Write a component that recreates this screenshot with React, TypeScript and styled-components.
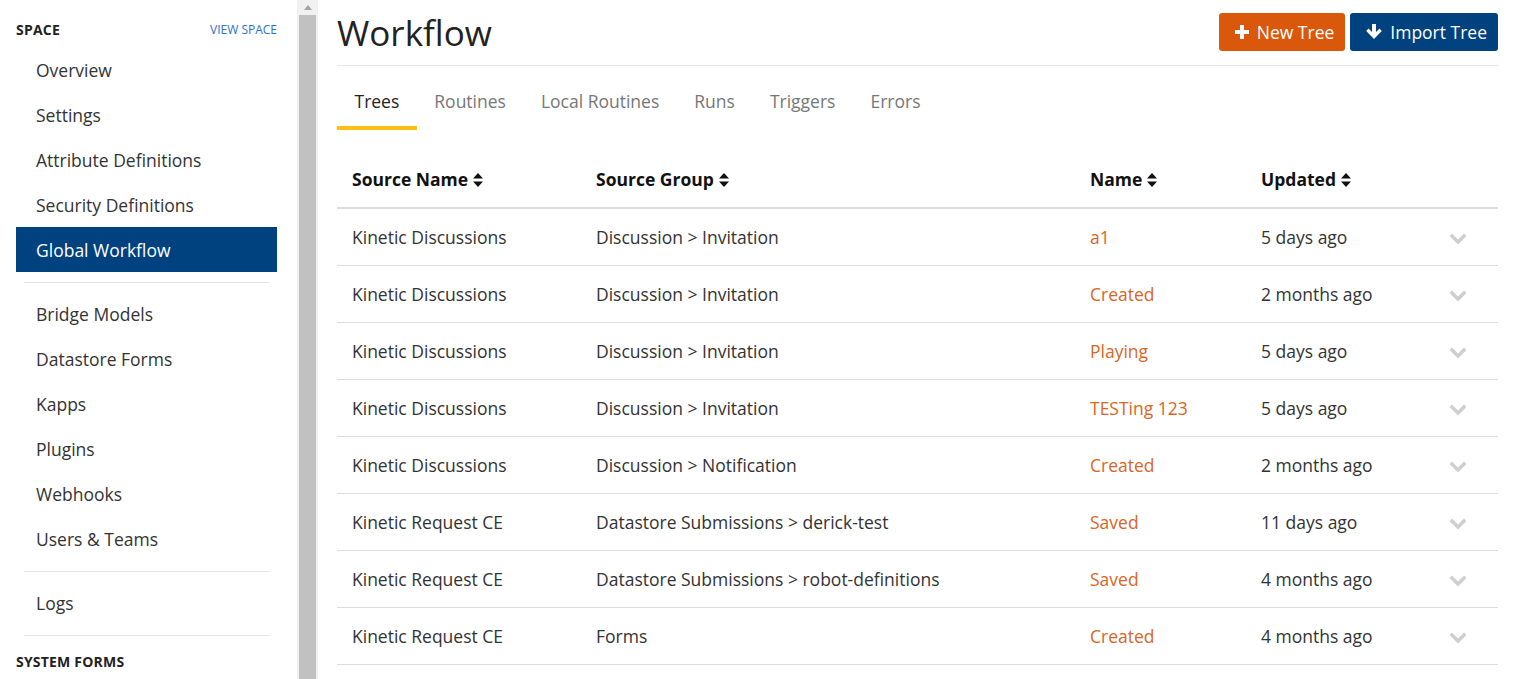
import React from "react";
import styled, { createGlobalStyle } from "styled-components";

const Global = createGlobalStyle`
  html, body { margin: 0; padding: 0; background: #fff; }
  body { font-family: "Open Sans", "Noto Sans", sans-serif; color: #333; overflow: hidden; }
  * { box-sizing: border-box; }
`;

const Page = styled.div`
  display: flex;
  width: 1514px;
  height: 679px;
  overflow: hidden;
`;

const Sidebar = styled.aside`
  width: 297px;
  flex: none;
  padding: 18px 20px 0 16px;
  display: flex;
  flex-direction: column;
`;

const SectionHead = styled.div<{ $spaced?: boolean }>`
  display: flex;
  align-items: center;
  justify-content: space-between;
  height: 22px;
  margin-top: ${(p) => (p.$spaced ? "6px" : "0")};
  margin-bottom: 7px;
`;

const SectionTitle = styled.span`
  font-size: 14px;
  font-weight: 700;
  color: #222;
  letter-spacing: 0.2px;
`;

const SectionLink = styled.span`
  font-size: 12px;
  color: #2d6fcf;
  text-transform: uppercase;
`;

const NavItem = styled.div<{ $active?: boolean }>`
  height: 45px;
  display: flex;
  align-items: center;
  padding-left: 20px;
  font-size: 17.5px;
  color: ${(p) => (p.$active ? "#fff" : "#333")};
  background: ${(p) => (p.$active ? "#00427f" : "transparent")};
`;

const NavDivider = styled.hr`
  border: 0;
  border-top: 1px solid #e3e3e3;
  margin: 10px 8px 8px;
`;

const ScrollTrack = styled.div`
  width: 21px;
  flex: none;
  background: #f1f1f1;
  display: flex;
  flex-direction: column;
  align-items: stretch;
  padding: 0 2px;
`;

const ScrollArrow = styled.div`
  height: 15px;
  display: flex;
  align-items: center;
  justify-content: center;
`;

const ScrollThumb = styled.div`
  flex: 1;
  background: #c1c1c1;
`;

const Main = styled.main`
  flex: 1;
  padding: 0 16px 0 19px;
  display: flex;
  flex-direction: column;
  min-width: 0;
`;

const Header = styled.header`
  height: 66px;
  display: flex;
  align-items: center;
  justify-content: space-between;
  border-bottom: 1px solid #e8e8e8;
`;

const Title = styled.h1`
  margin: 0;
  font-size: 35px;
  font-weight: 400;
  color: #222;
  line-height: 1;
`;

const Actions = styled.div`
  display: flex;
  gap: 5px;
  align-self: flex-start;
  margin-top: 13px;
`;

const Button = styled.button<{ $variant: "orange" | "navy" }>`
  height: 38px;
  border: 0;
  border-radius: 3px;
  padding: 0 11px 0 16px;
  display: flex;
  align-items: center;
  gap: 8px;
  font-family: inherit;
  font-size: 17.5px;
  color: #fff;
  background: ${(p) => (p.$variant === "orange" ? "#d9580b" : "#00427f")};
`;

const Tabs = styled.nav`
  display: flex;
  height: 64px;
`;

const Tab = styled.div<{ $active?: boolean }>`
  padding: 10px 17.5px 0;
  display: flex;
  align-items: center;
  font-size: 17.5px;
  color: ${(p) => (p.$active ? "#222" : "#777")};
  border-bottom: 4px solid ${(p) => (p.$active ? "#fbc117" : "transparent")};
`;

const Table = styled.table`
  margin-top: 21px;
  width: 100%;
  border-collapse: collapse;
  font-size: 17.5px;
`;

const Th = styled.th<{ $w?: number }>`
  text-align: left;
  font-weight: 700;
  font-size: 17.5px;
  color: #111;
  height: 57px;
  padding: 0 15px;
  border-bottom: 2px solid #ddd;
  width: ${(p) => (p.$w ? `${p.$w}px` : "auto")};
  white-space: nowrap;
`;

const Td = styled.td`
  height: 57px;
  padding: 0 15px;
  border-bottom: 1px solid #ddd;
  color: #333;
  white-space: nowrap;
`;

const NameLink = styled.span`
  color: #d9661f;
`;

const ChevronCell = styled(Td)`
  text-align: right;
  padding-right: 32px;
`;

const SortIcon = () => (
  <svg width="10" height="14" viewBox="0 0 10 14" style={{ marginLeft: 5, verticalAlign: "-1px" }}>
    <path d="M5 0 L10 5.5 H0 Z M5 14 L10 8.5 H0 Z" fill="#111" />
  </svg>
);

const Chevron = () => (
  <svg width="16" height="12" viewBox="0 0 16 12" style={{ verticalAlign: "middle" }}>
    <path d="M2 3 L8 9 L14 3" stroke="#cfcfcf" strokeWidth="3.4" fill="none" strokeLinecap="square" />
  </svg>
);

const PlusIcon = () => (
  <svg width="14" height="14" viewBox="0 0 14 14">
    <path d="M5 0 H9 V5 H14 V9 H9 V14 H5 V9 H0 V5 H5 Z" fill="#fff" />
  </svg>
);

const ArrowDownIcon = () => (
  <svg width="16" height="16" viewBox="0 0 16 16">
    <path d="M6 0 H10 V8 L13.5 4.5 L15.8 7 L8 15 L0.2 7 L2.5 4.5 L6 8 Z" fill="#fff" />
  </svg>
);

const navTop = ["Overview", "Settings", "Attribute Definitions", "Security Definitions", "Global Workflow"];
const navMid = ["Bridge Models", "Datastore Forms", "Kapps", "Plugins", "Webhooks", "Users & Teams"];

const rows = [
  ["Kinetic Discussions", "Discussion > Invitation", "a1", "5 days ago"],
  ["Kinetic Discussions", "Discussion > Invitation", "Created", "2 months ago"],
  ["Kinetic Discussions", "Discussion > Invitation", "Playing", "5 days ago"],
  ["Kinetic Discussions", "Discussion > Invitation", "TESTing 123", "5 days ago"],
  ["Kinetic Discussions", "Discussion > Notification", "Created", "2 months ago"],
  ["Kinetic Request CE", "Datastore Submissions > derick-test", "Saved", "11 days ago"],
  ["Kinetic Request CE", "Datastore Submissions > robot-definitions", "Saved", "4 months ago"],
  ["Kinetic Request CE", "Forms", "Created", "4 months ago"],
];

const tabs = ["Trees", "Routines", "Local Routines", "Runs", "Triggers", "Errors"];

export default function App() {
  return (
    <>
      <Global />
      <Page>
        <Sidebar>
          <SectionHead>
            <SectionTitle>SPACE</SectionTitle>
            <SectionLink>View Space</SectionLink>
          </SectionHead>
          {navTop.map((n) => (
            <NavItem key={n} $active={n === "Global Workflow"}>
              {n}
            </NavItem>
          ))}
          <NavDivider />
          {navMid.map((n) => (
            <NavItem key={n}>{n}</NavItem>
          ))}
          <NavDivider />
          <NavItem>Logs</NavItem>
          <NavDivider />
          <SectionHead $spaced>
            <SectionTitle>SYSTEM FORMS</SectionTitle>
          </SectionHead>
        </Sidebar>
        <ScrollTrack>
          <ScrollArrow>
            <svg width="8" height="5" viewBox="0 0 8 5">
              <path d="M4 0 L8 5 H0 Z" fill="#a3a3a3" />
            </svg>
          </ScrollArrow>
          <ScrollThumb />
        </ScrollTrack>
        <Main>
          <Header>
            <Title>Workflow</Title>
            <Actions>
              <Button $variant="orange">
                <PlusIcon />
                New Tree
              </Button>
              <Button $variant="navy">
                <ArrowDownIcon />
                Import Tree
              </Button>
            </Actions>
          </Header>
          <Tabs>
            {tabs.map((t) => (
              <Tab key={t} $active={t === "Trees"}>
                {t}
              </Tab>
            ))}
          </Tabs>
          <Table>
            <thead>
              <tr>
                <Th $w={244}>Source Name<SortIcon /></Th>
                <Th $w={494}>Source Group<SortIcon /></Th>
                <Th $w={171}>Name<SortIcon /></Th>
                <Th>Updated<SortIcon /></Th>
                <Th $w={80} />
              </tr>
            </thead>
            <tbody>
              {rows.map((r, i) => (
                <tr key={i}>
                  <Td>{r[0]}</Td>
                  <Td>{r[1]}</Td>
                  <Td>
                    <NameLink>{r[2]}</NameLink>
                  </Td>
                  <Td>{r[3]}</Td>
                  <ChevronCell>
                    <Chevron />
                  </ChevronCell>
                </tr>
              ))}
            </tbody>
          </Table>
        </Main>
      </Page>
    </>
  );
}
